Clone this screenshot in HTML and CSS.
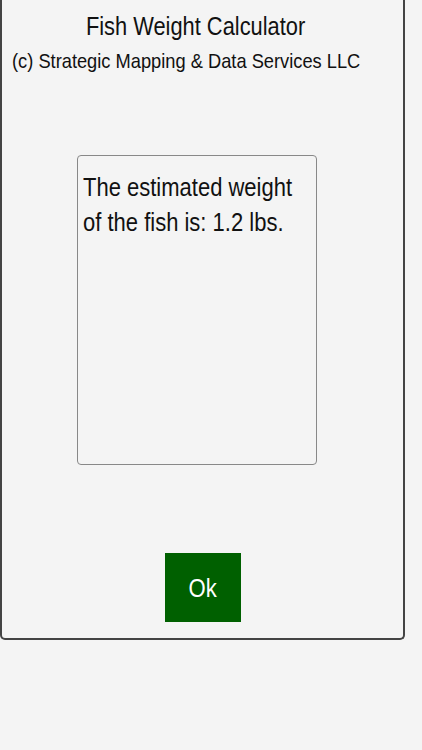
FILE: index.html
```html
<!DOCTYPE html>
<html>
<head>
<meta charset="utf-8">
<link rel="stylesheet" href="styles.css">
</head>
<body>
<div class="panel">
  <div class="title"><span class="title-text">Fish Weight Calculator</span></div>
  <div class="subtitle"><span class="subtitle-text">(c) Strategic Mapping &amp; Data Services LLC</span></div>
  <div class="result-wrap">
    <div class="result"><div class="result-text">The estimated weight of the fish is: 1.2 lbs.</div></div>
  </div>
  <div class="btn-wrap">
    <div class="ok"><span class="ok-text">Ok</span></div>
  </div>
</div>
</body>
</html>
```
FILE: styles.css
```css
html, body {
  margin: 0;
  padding: 0;
  background: #f4f4f4;
  font-family: "Liberation Sans", Arial, sans-serif;
  color: #111;
}
.panel {
  box-sizing: border-box;
  width: 405px;
  height: 640px;
  border: 2px solid #444;
  border-top: none;
  border-radius: 0 0 5px 5px;
  display: flex;
  flex-direction: column;
}
.title {
  font-size: 26px;
  line-height: 30px;
  padding-top: 11px;
  width: 388px;
  text-align: center;
  white-space: nowrap;
}
.title-text {
  display: inline-block;
  transform: scaleX(0.84);
  transform-origin: center;
}
.subtitle {
  font-size: 21px;
  line-height: 24px;
  padding-top: 8px;
  padding-left: 10px;
  white-space: nowrap;
}
.subtitle-text {
  display: inline-block;
  transform: scaleX(0.87);
  transform-origin: left center;
}
.result-wrap {
  display: flex;
  padding-top: 82px;
  padding-left: 75px;
}
.result {
  box-sizing: border-box;
  width: 240px;
  height: 310px;
  border: 1.5px solid #888;
  border-radius: 4px;
  padding: 14px 5px;
  font-size: 26px;
  line-height: 35px;
  overflow: hidden;
}
.result-text {
  width: 270px;
  transform: scaleX(0.846);
  transform-origin: left top;
}
.btn-wrap {
  display: flex;
  justify-content: center;
  padding-top: 88px;
}
.ok {
  width: 76px;
  height: 69px;
  background: #006000;
  color: #fff;
  font-size: 26px;
  line-height: 30px;
  display: flex;
  align-items: center;
  justify-content: center;
}
.ok-text {
  display: inline-block;
  transform: scaleX(0.85);
}
```
